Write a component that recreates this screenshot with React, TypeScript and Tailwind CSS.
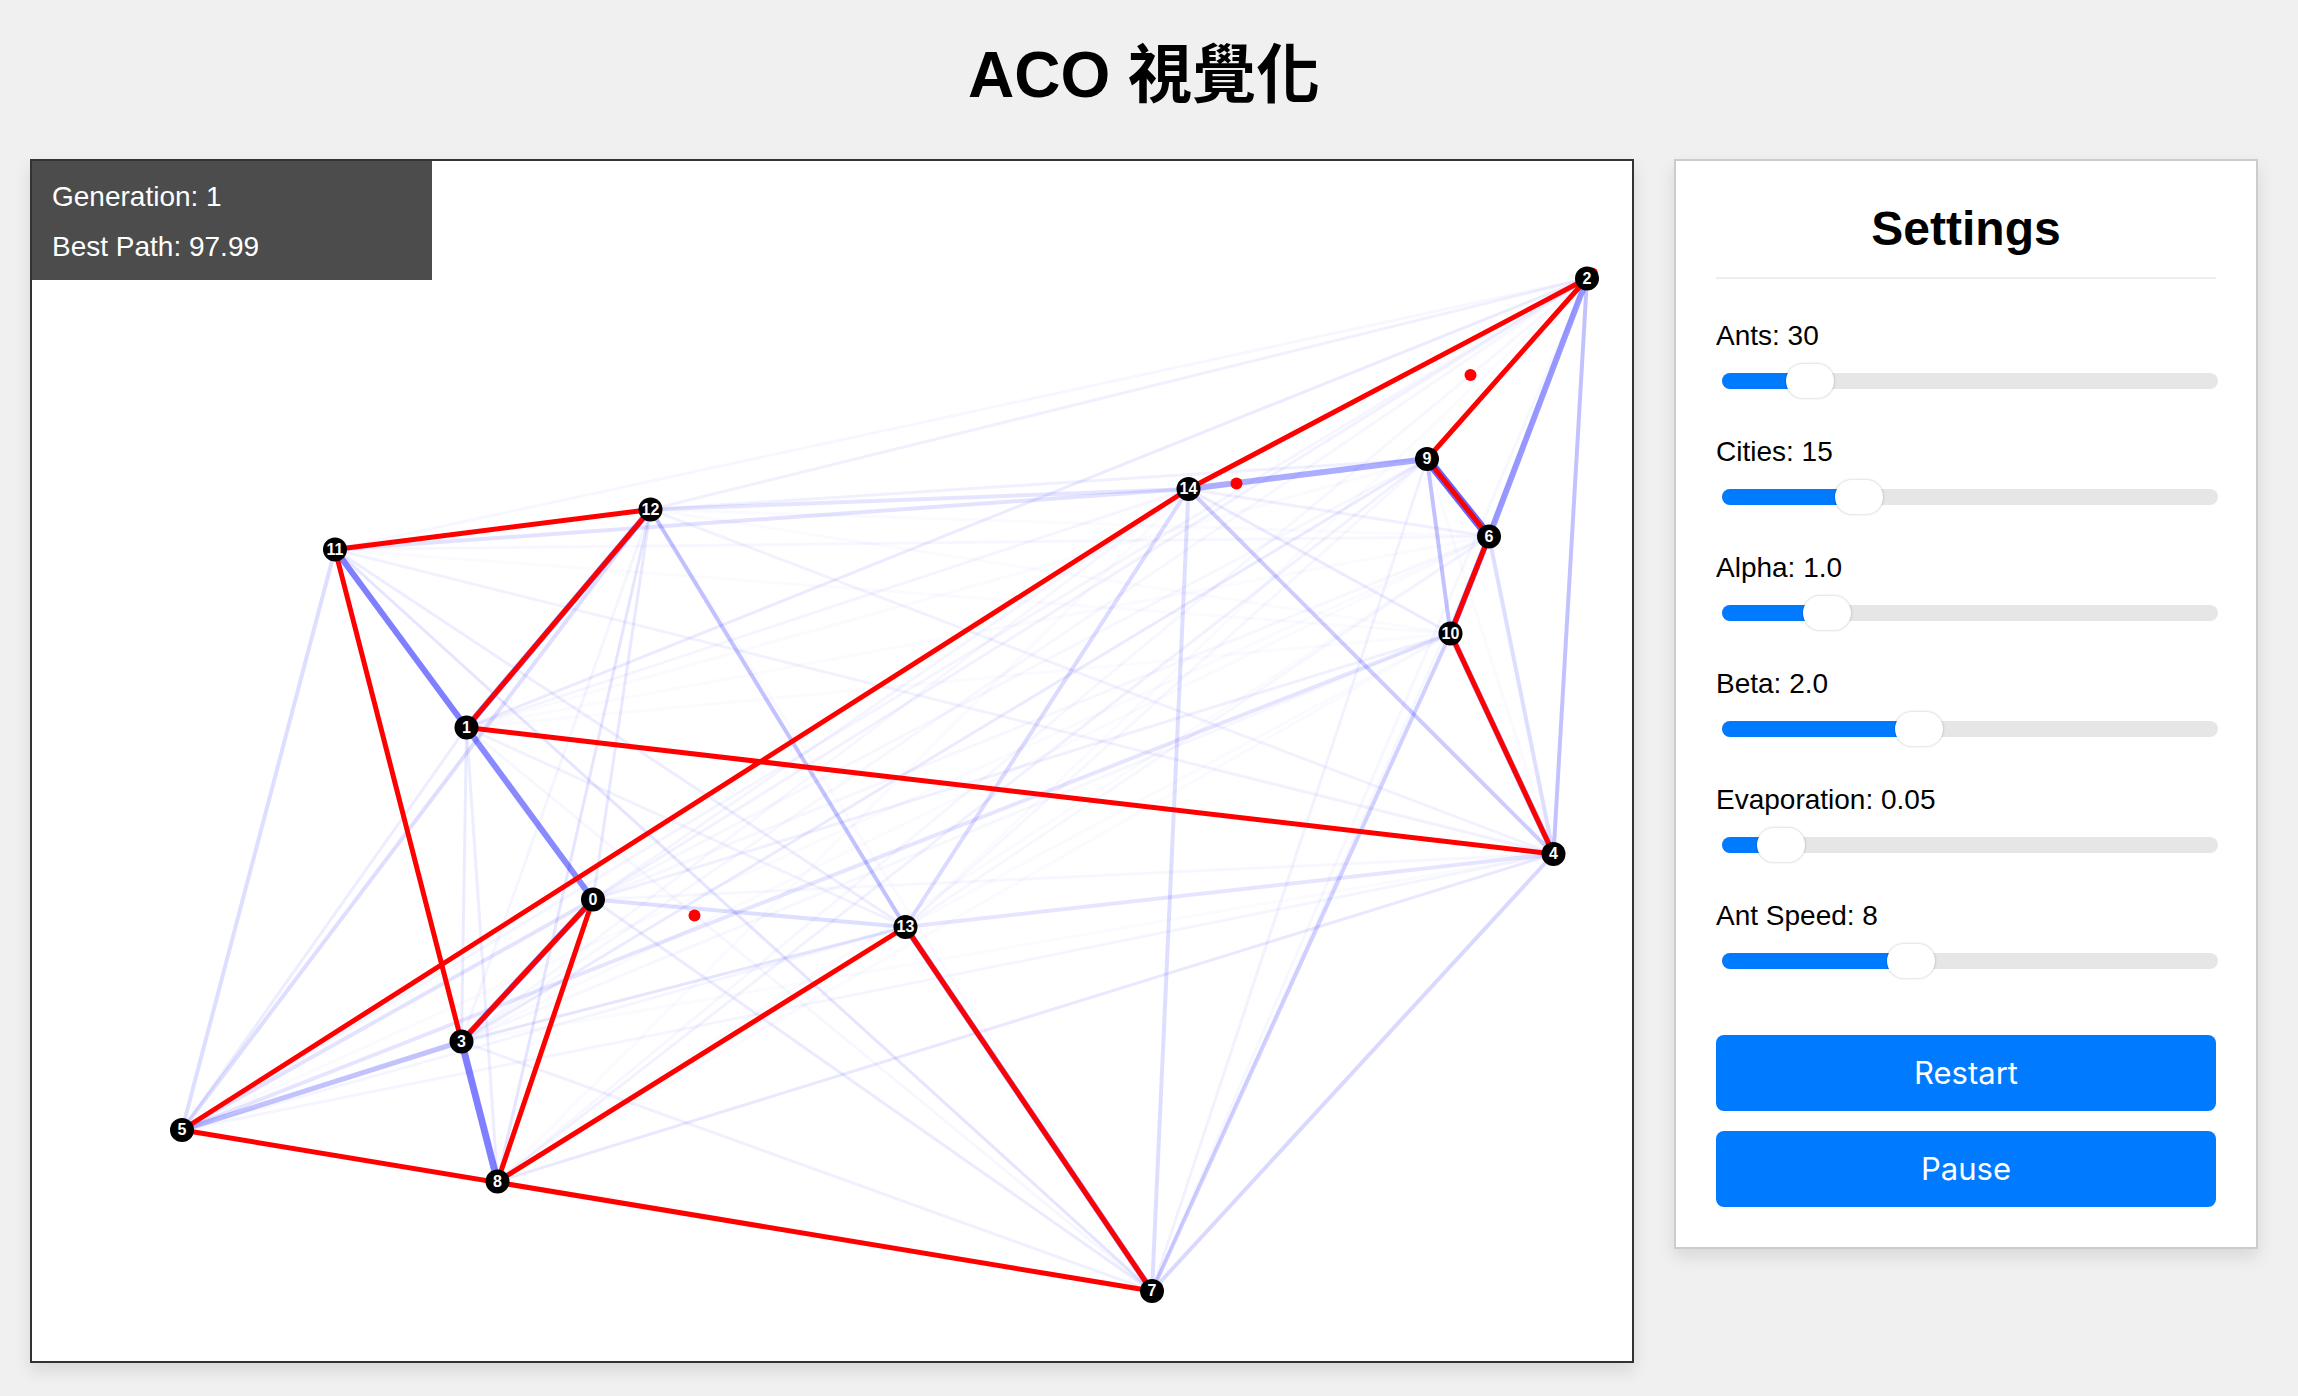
import { useState } from 'react'

interface Setting {
  id: string
  label: string
  min: number
  max: number
  step: number
  digits: number
  initial: number
}

const SETTINGS: Setting[] = [
  { id: 'ants', label: 'Ants', min: 1, max: 200, step: 1, digits: 0, initial: 30 },
  { id: 'cities', label: 'Cities', min: 3, max: 50, step: 1, digits: 0, initial: 15 },
  { id: 'alpha', label: 'Alpha', min: 0.1, max: 5, step: 0.1, digits: 1, initial: 1 },
  { id: 'beta', label: 'Beta', min: 0.1, max: 5, step: 0.1, digits: 1, initial: 2 },
  { id: 'evaporation', label: 'Evaporation', min: 0.01, max: 0.5, step: 0.01, digits: 2, initial: 0.05 },
  { id: 'speed', label: 'Ant Speed', min: 1, max: 20, step: 1, digits: 0, initial: 8 },
]

// index = city number
const CITIES: [number, number][] = [
  [561, 738.5],
  [434.5, 566.5],
  [1555, 117.5],
  [429.5, 880.5],
  [1521.5, 693],
  [150, 969],
  [1457, 375.5],
  [1120, 1130],
  [465.5, 1020.5],
  [1395, 298],
  [1418.5, 472.5],
  [303, 388.5],
  [618.5, 348.5],
  [873.5, 766],
  [1156.5, 328],
]

const BEST_PATH = [5, 7, 13, 8, 0, 3, 11, 12, 1, 4, 10, 6, 9, 2, 14]

const ANTS: [number, number][] = [
  [1438.5, 214],
  [1204.5, 322.5],
  [662.5, 754.5],
  [1560, 112.5],
]

// from, to, opacity, width
const PHEROMONES: [number, number, number, number][] = [
  [6, 9, 0.6, 9],
  [3, 8, 0.5, 7],
  [1, 11, 0.5, 6],
  [0, 1, 0.46, 6],
  [1, 12, 0.5, 6],
  [0, 3, 0.5, 6],
  [6, 10, 0.5, 6],
  [2, 6, 0.4, 6],
  [9, 14, 0.32, 6],
  [4, 10, 0.35, 6],
  [7, 13, 0.4, 6],
  [3, 5, 0.24, 5],
  [12, 13, 0.24, 4],
  [2, 4, 0.24, 4],
  [9, 10, 0.24, 4],
  [4, 14, 0.2, 4],
  [7, 10, 0.18, 4],
  [4, 7, 0.15, 4],
  [4, 6, 0.13, 4],
  [0, 13, 0.13, 4],
  [5, 11, 0.13, 4],
  [5, 12, 0.13, 4],
  [13, 14, 0.14, 4],
  [7, 14, 0.13, 4],
  [4, 13, 0.1, 4],
  [11, 14, 0.11, 4],
  [12, 14, 0.1, 4],
  [5, 10, 0.1, 4],
  [3, 13, 0.1, 3],
  [0, 5, 0.11, 4],
  [0, 12, 0.09, 3],
  [8, 12, 0.1, 3],
  [1, 3, 0.08, 3],
  [1, 8, 0.07, 3],
  [1, 5, 0.07, 3],
  [3, 9, 0.08, 3],
  [8, 9, 0.05, 3],
  [1, 2, 0.08, 3],
  [4, 8, 0.09, 3],
  [7, 11, 0.1, 3],
  [0, 7, 0.08, 3],
  [10, 14, 0.08, 3],
  [6, 14, 0.06, 3],
  [11, 13, 0.07, 3],
  [9, 12, 0.06, 3],
  [0, 10, 0.06, 3],
  [3, 7, 0.06, 3],
  [7, 9, 0.05, 3],
  [4, 11, 0.05, 3],
  [4, 12, 0.05, 3],
  [1, 13, 0.05, 3],
  [2, 12, 0.06, 3],
  [2, 11, 0.03, 3],
  [0, 2, 0.05, 3],
  [2, 5, 0.04, 3],
  [2, 3, 0.03, 3],
  [2, 8, 0.03, 3],
  [2, 13, 0.02, 3],
  [2, 7, 0.03, 3],
  [2, 10, 0.02, 3],
  [4, 9, 0.02, 3],
  [4, 5, 0.04, 3],
  [3, 4, 0.02, 3],
  [0, 4, 0.03, 3],
  [6, 11, 0.03, 3],
  [6, 12, 0.02, 3],
  [10, 11, 0.02, 3],
  [10, 12, 0.02, 3],
  [0, 14, 0.04, 3],
  [3, 14, 0.03, 3],
  [8, 14, 0.02, 3],
  [1, 14, 0.04, 3],
  [3, 12, 0.04, 3],
  [0, 9, 0.03, 3],
  [1, 9, 0.02, 3],
  [9, 13, 0.03, 3],
  [0, 6, 0.03, 3],
  [1, 6, 0.02, 3],
  [3, 6, 0.02, 3],
  [5, 6, 0.02, 3],
  [6, 8, 0.02, 3],
  [6, 13, 0.03, 3],
  [6, 7, 0.03, 3],
  [1, 10, 0.02, 3],
  [3, 10, 0.03, 3],
  [8, 10, 0.02, 3],
  [10, 13, 0.02, 3],
  [5, 13, 0.04, 3],
  [1, 7, 0.03, 3],
  [7, 12, 0.02, 3],
]

function AntMap() {
  const route = BEST_PATH.map(i => CITIES[i].join(',')).join(' ')

  return (
    <svg viewBox="0 0 1600 1200" className="block w-full" role="img" aria-label="ACO">
      {PHEROMONES.map(([a, b, opacity, width]) => (
        <line
          key={`${a}-${b}`}
          x1={CITIES[a][0]}
          y1={CITIES[a][1]}
          x2={CITIES[b][0]}
          y2={CITIES[b][1]}
          stroke="#0000ff"
          strokeOpacity={opacity}
          strokeWidth={width}
        />
      ))}
      <polygon points={route} fill="none" stroke="#ff0000" strokeWidth={5} strokeLinejoin="round" />
      {ANTS.map(([x, y]) => (
        <circle key={`${x}-${y}`} cx={x} cy={y} r={6} fill="#ff0000" />
      ))}
      {CITIES.map(([x, y], i) => (
        <g key={i}>
          <circle cx={x} cy={y} r={12} fill="#000000" />
          <text x={x} y={y + 5} textAnchor="middle" fill="#ffffff" className="text-[16px] font-bold">
            {i}
          </text>
        </g>
      ))}
    </svg>
  )
}

interface SliderProps {
  setting: Setting
  value: number
  onChange: (value: number) => void
}

function SettingSlider({ setting, value, onChange }: SliderProps) {
  const { id, label, min, max, step, digits } = setting
  const ratio = (value - min) / (max - min)

  return (
    <div className="mb-9">
      <label htmlFor={id} className="mb-2.5 block text-[28px] leading-[34px]">
        {`${label}: ${value.toFixed(digits)}`}
      </label>
      <div className="-mr-1 ml-1 grid h-9 items-center">
        <div className="col-start-1 row-start-1 mx-0.5 h-4 overflow-hidden rounded-full bg-[#e6e6e6]">
          <div className="h-full bg-[#007bff]" style={{ width: `calc(22px + (100% - 44px) * ${ratio})` }} />
        </div>
        <input
          id={id}
          type="range"
          min={min}
          max={max}
          step={step}
          value={value}
          onChange={e => onChange(Number(e.target.value))}
          className="col-start-1 row-start-1 m-0 h-9 w-full appearance-none bg-transparent [&::-webkit-slider-thumb]:h-[34px] [&::-webkit-slider-thumb]:w-12 [&::-webkit-slider-thumb]:appearance-none [&::-webkit-slider-thumb]:rounded-[17px] [&::-webkit-slider-thumb]:bg-white [&::-webkit-slider-thumb]:shadow-[0_0_2px_1px_rgba(0,0,0,0.12)]"
        />
      </div>
    </div>
  )
}

export default function App() {
  const [values, setValues] = useState(() => SETTINGS.map(s => s.initial))
  const [paused, setPaused] = useState(false)

  const update = (index: number, value: number) =>
    setValues(prev => prev.map((v, i) => (i === index ? value : v)))

  return (
    <div className="min-h-screen bg-[#f0f0f0] pt-[39px] pr-10 pb-8 pl-[30px] font-['Liberation_Sans','Noto_Sans_CJK_TC',sans-serif] text-black">
      <h1 className="mb-12 text-center text-[64px] leading-[72px] font-bold">ACO 視覺化</h1>

      <main className="flex items-start gap-10">
        <section className="relative min-w-0 flex-1 border-2 border-[#333] bg-white shadow-[0_8px_16px_rgba(0,0,0,0.1)]">
          <AntMap />
          <div className="absolute top-0 left-0 h-[119px] w-[400px] bg-black/70 pt-[11px] pl-5 text-[28px] leading-[50px] text-white">
            <p>Generation: 1</p>
            <p>Best Path: 97.99</p>
          </div>
        </section>

        <aside className="w-[584px] shrink-0 border-2 border-[#ccc] bg-white p-10 shadow-[0_8px_16px_rgba(0,0,0,0.1)]">
          <h2 className="mb-10 border-b-2 border-[#eee] pb-5 text-center text-[48px] leading-[56px] font-bold">
            Settings
          </h2>
          {SETTINGS.map((setting, i) => (
            <SettingSlider
              key={setting.id}
              setting={setting}
              value={values[i]}
              onChange={value => update(i, value)}
            />
          ))}
          <div className="mt-14 flex flex-col gap-5 font-['Inter',sans-serif] text-[31px] text-white">
            <button
              type="button"
              onClick={() => setValues(SETTINGS.map(s => s.initial))}
              className="h-[76px] rounded-lg bg-[#007bff]"
            >
              Restart
            </button>
            <button
              type="button"
              onClick={() => setPaused(!paused)}
              className="h-[76px] rounded-lg bg-[#007bff]"
            >
              {paused ? 'Resume' : 'Pause'}
            </button>
          </div>
        </aside>
      </main>
    </div>
  )
}
